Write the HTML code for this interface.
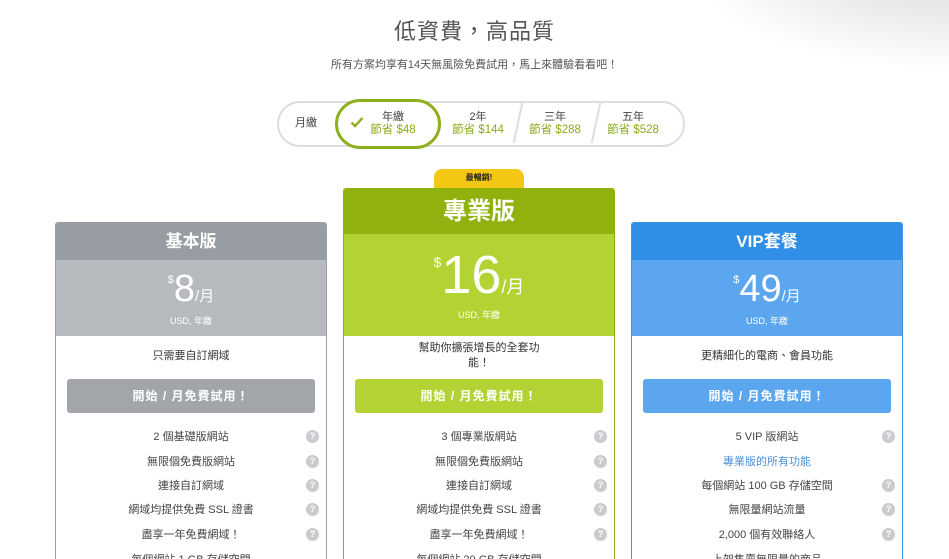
<!DOCTYPE html><html style="height:559px;overflow:hidden"><head><meta charset="utf-8"><style>
body{margin:0;width:949px;height:559px;overflow:hidden;background:#fff;font-family:"Liberation Sans","Noto Sans CJK TC",sans-serif;position:relative;color:#444}
.a{position:absolute}
.shadow{position:absolute;right:-60px;top:-60px;width:320px;height:130px;border-radius:0 0 0 90px;background:radial-gradient(ellipse at 80% 20%,rgba(0,0,0,.15),rgba(0,0,0,0) 70%)}
h1{position:absolute;top:14px;left:0;width:949px;text-align:center;font-weight:400;font-size:22px;margin:0;color:#555;letter-spacing:1px}
.sub{top:56px;left:0;width:949px;text-align:center;font-size:11px;color:#555}
.pill{left:277px;top:101px;width:404px;height:42px;border:2px solid #ddd;border-radius:24px}
.opt{position:absolute;text-align:center;font-size:11px;color:#444;line-height:13px}
.opt b{display:block;font-weight:400;color:#8aab1a;font-size:11.5px}
.sel{left:335px;top:99px;width:100px;height:44px;border:3px solid #8fb01e;border-radius:26px;background:#fff}
.sep{position:absolute;top:103px;width:2px;height:40px;background:#ddd;transform:skewX(-12deg)}
.card{position:absolute;width:270px;height:340px;border:1px solid;border-bottom:0;border-radius:3px 3px 0 0;background:#fff;overflow:hidden}
.hd{height:37px;color:#fff;text-align:center;font-weight:bold;font-size:17px;line-height:37px}
.pr{height:76px;color:#fff;text-align:center;position:relative}
.num{position:absolute;left:0;width:100%;text-align:center;color:#fff}
.desc{text-align:center;font-size:11px;color:#333;margin-top:13px;line-height:15px}
.btn{position:absolute;left:11px;width:248px;height:34px;border-radius:3px;color:#fff;font-size:12px;font-weight:bold;text-align:center;line-height:34px;letter-spacing:1px}
.q{position:absolute;width:13px;height:13px;border-radius:50%;background:#c9cbce;color:#fff;font-size:9px;font-weight:bold;line-height:13px;text-align:center}
.badge{left:434px;top:169px;width:90px;height:20px;background:#f3c713;border-radius:8px 8px 0 0;font-size:8px;text-align:center;line-height:18px;color:#222;font-weight:bold}
</style></head><body>
<div class="shadow"></div>
<h1>低資費，高品質</h1>
<div class="a sub">所有方案均享有14天無風險免費試用，馬上來體驗看看吧！</div>
<div class="a pill"></div>
<div class="sep" style="left:517px"></div><div class="sep" style="left:595px"></div>
<div class="opt" style="left:295px;top:117px">月繳</div>
<div class="a sel"></div>
<svg class="a" style="left:350px;top:116px" width="14" height="12" viewBox="0 0 14 12"><path d="M1.5 6.5l3.5 3.5 7.5-8" stroke="#8fb01e" stroke-width="2.4" fill="none"/></svg>
<div class="opt" style="left:368px;top:111px;width:50px">年繳<b>節省 $48</b></div>
<div class="opt" style="left:448px;top:111px;width:60px">2年<b>節省 $144</b></div>
<div class="opt" style="left:525px;top:111px;width:60px">三年<b>節省 $288</b></div>
<div class="opt" style="left:603px;top:111px;width:60px">五年<b>節省 $528</b></div>
<div class="a badge">最暢銷!</div>

<div class="card" style="left:55px;top:222px;border-color:#9ba0a6">
<div class="hd" style="background:#989da3">基本版</div>
<div class="pr" style="background:#b6babe">
<div class="num" style="top:8px"><span style="font-size:11px;vertical-align:top;position:relative;top:6px">$</span><span style="font-size:38px">8</span><span style="font-size:15px">/月</span></div>
<div class="num" style="top:54px;font-size:9px">USD, 年繳</div></div>
<div class="desc">只需要自訂網域</div>
<div class="btn" style="top:156px;background:#a2a6ab">開始 / 月免費試用！</div>
</div>

<div class="card" style="left:343px;top:188px;height:374px;border-color:#8fb00f">
<div class="hd" style="background:#91b20e;height:45px;line-height:45px;font-size:24px">專業版</div>
<div class="pr" style="background:#b3d334;height:102px">
<div class="num" style="top:10px"><span style="font-size:14px;vertical-align:top;position:relative;top:10px">$</span><span style="font-size:54px">16</span><span style="font-size:18px">/月</span></div>
<div class="num" style="top:74px;font-size:9px">USD, 年繳</div></div>
<div class="desc" style="margin-top:5px">幫助你擴張增長的全套功<br>能！</div>
<div class="btn" style="top:190px;background:#b3d334">開始 / 月免費試用！</div>
</div>

<div class="card" style="left:631px;top:222px;border-color:#3d93e3">
<div class="hd" style="background:#2f8ee6">VIP套餐</div>
<div class="pr" style="background:#5ba6ef">
<div class="num" style="top:8px"><span style="font-size:11px;vertical-align:top;position:relative;top:6px">$</span><span style="font-size:38px">49</span><span style="font-size:15px">/月</span></div>
<div class="num" style="top:54px;font-size:9px">USD, 年繳</div></div>
<div class="desc">更精細化的電商、會員功能</div>
<div class="btn" style="top:156px;background:#5ba6ef">開始 / 月免費試用！</div>
</div>

<div id="feat"></div>
<script>
var cols=[[55,["2 個基礎版網站","無限個免費版網站","連接自訂網域","網域均提供免費 SSL 證書","盡享一年免費網域！","每個網站 1 GB 存儲空間"]],
[343,["3 個專業版網站","無限個免費版網站","連接自訂網域","網域均提供免費 SSL 證書","盡享一年免費網域！","每個網站 20 GB 存儲空間"]],
[631,["5 VIP 版網站","專業版的所有功能","每個網站 100 GB 存儲空間","無限量網站流量","2,000 個有效聯絡人","上架售賣無限量的商品"]]];
var ys=[428,453,477,501,526,551],h="";
cols.forEach(function(c,ci){c[1].forEach(function(t,i){var blue=(ci==2&&i==1);
h+='<div class="a" style="left:'+(c[0]+1)+'px;top:'+ys[i]+'px;width:270px;height:'+Math.min(14,559-ys[i])+'px;overflow:hidden;text-align:center;font-size:11px;color:'+(blue?'#4a90d9':'#444')+'">'+t+'</div>';
if(!blue&&ys[i]<545)h+='<div class="q" style="left:'+(c[0]+251)+'px;top:'+(ys[i]+2)+'px">?</div>';});});
document.getElementById('feat').innerHTML=h;
</script>
</body></html>
